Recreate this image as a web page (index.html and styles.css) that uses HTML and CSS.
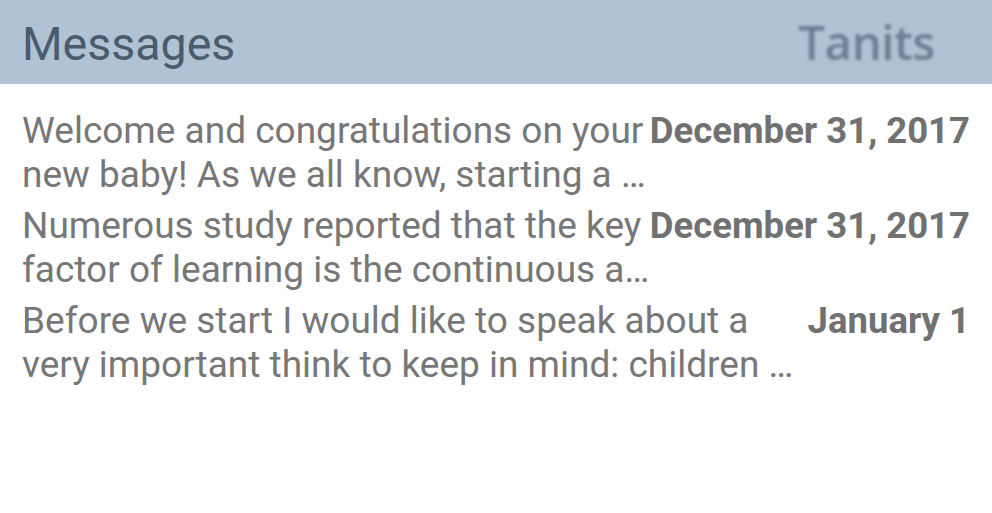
FILE: index.html
```html
<!DOCTYPE html>
<html>
<head>
<meta charset="utf-8">
<link rel="stylesheet" href="styles.css">
</head>
<body>
<header class="topbar">
  <h1 class="title">Messages</h1>
  <div class="brand">Tanits</div>
</header>
<main class="list">
  <div class="item">
    <p class="text"><span class="line">Welcome and congratulations on your</span><span class="line">new baby! As we all know, starting a …</span></p>
    <span class="date">December 31, 2017</span>
  </div>
  <div class="item">
    <p class="text"><span class="line">Numerous study reported that the key</span><span class="line">factor of learning is the continuous a…</span></p>
    <span class="date">December 31, 2017</span>
  </div>
  <div class="item">
    <p class="text"><span class="line">Before we start I would like to speak about a</span><span class="line">very important think to keep in mind: children …</span></p>
    <span class="date">January 1</span>
  </div>
</main>
</body>
</html>
```
FILE: styles.css
```css
* { box-sizing: border-box; }
html, body { margin: 0; padding: 0; background: #ffffff; }
body { font-family: Roboto, "Noto Sans", sans-serif; width: 992px; height: 513px; overflow: hidden; }
.topbar {
  height: 84px;
  background: #b0c3d5;
  display: flex;
  align-items: center;
  justify-content: space-between;
  padding: 0 57px 0 22px;
}
.title {
  margin: 0;
  font-weight: 400;
  font-size: 46.5px;
  color: #4a5c6b;
  line-height: 1;
  padding-top: 4px;
}
.brand {
  font-family: "Open Sans", sans-serif;
  font-weight: 600;
  font-size: 47.5px;
  color: #6c7f93;
  filter: blur(1.4px);
  line-height: 1;
  letter-spacing: -0.5px;
}
.list {
  display: flex;
  flex-direction: column;
  gap: 7px;
  padding: 25px 22px 0 22px;
}
.item {
  display: flex;
  align-items: flex-start;
  justify-content: space-between;
  gap: 8px;
}
.text {
  margin: 0;
  min-width: 0;
  font-size: 37px;
  line-height: 44px;
  color: #777777;
}
.line {
  display: block;
  white-space: nowrap;
}
.date {
  white-space: nowrap;
  font-size: 36.5px;
  line-height: 44px;
  font-weight: 700;
  color: #717171;
}
```
